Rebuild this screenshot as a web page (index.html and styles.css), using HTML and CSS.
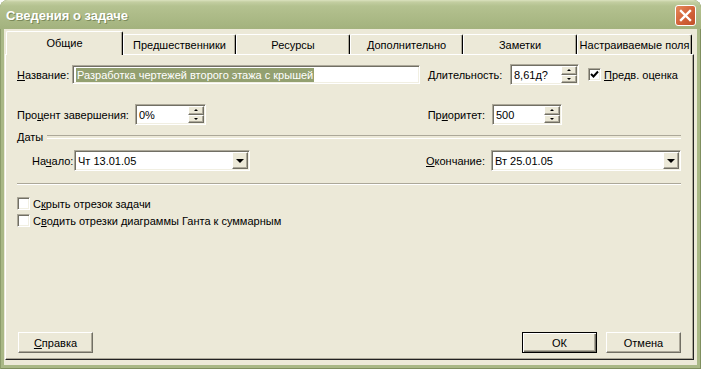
FILE: index.html
```html
<!DOCTYPE html>
<html lang="ru">
<head>
    <meta charset="UTF-8">
    <title>Сведения о задаче</title>
    <link rel="stylesheet" href="styles.css">
</head>
<body>
    <div class="window">
        <div class="titlebar">
            <span class="title">Сведения о задаче</span>
            <span class="close">
                <svg width="13" height="13" viewBox="0 0 13 13">
                    <path d="M2 2 L11 11 M11 2 L2 11" stroke="#fff" stroke-width="2.4" stroke-linecap="square"/>
                </svg>
            </span>
        </div>

        <div class="client">
            <!-- Tabs -->
            <div class="tabs">
                <div class="tab active" style="width:117px">Общие</div>
                <div class="tab" style="width:113px">Предшественники</div>
                <div class="tab" style="width:114px">Ресурсы</div>
                <div class="tab" style="width:113px">Дополнительно</div>
                <div class="tab" style="width:114px">Заметки</div>
                <div class="tab" style="width:115px">Настраиваемые поля</div>
            </div>

            <div class="page">
                <div class="row row-first">
                    <div class="left">
                        <label class="lbl lbl-name"><u>Н</u>азвание:</label>
                        <div class="edit edit-name"><span class="sel">Разработка чертежей второго этажа с крышей</span></div>
                    </div>
                    <div class="right">
                        <label class="lbl lbl-dur"><u>Д</u>лительность:</label>
                        <div class="spin spin-dur">
                            <span class="val">8,61д?</span>
                            <span class="arrows"><span class="arr up"></span><span class="arr down"></span></span>
                        </div>
                        <div class="check check-est">
                            <span class="box">
                                <svg width="9" height="9" viewBox="0 0 9 9">
                                    <path d="M1 4 L3.5 6.5 L8 1.5" fill="none" stroke="#000" stroke-width="2"/>
                                </svg>
                            </span>
                            <span><u>П</u>редв. оценка</span>
                        </div>
                    </div>
                </div>

                <div class="row row-second">
                    <div class="left">
                        <label class="lbl lbl-pct">Про<u>ц</u>ент завершения:</label>
                        <div class="spin spin-pct">
                            <span class="val">0%</span>
                            <span class="arrows"><span class="arr up"></span><span class="arr down"></span></span>
                        </div>
                    </div>
                    <div class="right">
                        <label class="lbl lbl-rt">Пр<u>и</u>оритет:</label>
                        <div class="spin spin-prio">
                            <span class="val">500</span>
                            <span class="arrows"><span class="arr up"></span><span class="arr down"></span></span>
                        </div>
                    </div>
                </div>

                <div class="group">Даты</div>

                <div class="row row-dates">
                    <div class="left">
                        <label class="lbl lbl-start">На<u>ч</u>ало:</label>
                        <div class="combo combo-start">
                            <span class="val">Чт 13.01.05</span>
                            <span class="drop"></span>
                        </div>
                    </div>
                    <div class="right">
                        <label class="lbl lbl-rt"><u>О</u>кончание:</label>
                        <div class="combo combo-end">
                            <span class="val">Вт 25.01.05</span>
                            <span class="drop"></span>
                        </div>
                    </div>
                </div>

                <div class="sep"></div>

                <div class="check check-row">
                    <span class="box"></span>
                    <span>С<u>к</u>рыть отрезок задачи</span>
                </div>
                <div class="check check-row second">
                    <span class="box"></span>
                    <span>С<u>в</u>одить отрезки диаграммы Ганта к суммарным</span>
                </div>

                <div class="buttons">
                    <div class="btn"><u>С</u>правка</div>
                    <span class="spacer"></span>
                    <div class="btn default">ОК</div>
                    <div class="btn">Отмена</div>
                </div>
            </div>
        </div>
    </div>
</body>
</html>
```

FILE: styles.css
```css
* {
    margin: 0;
    padding: 0;
    box-sizing: border-box;
}

body {
    width: 701px;
    height: 369px;
    overflow: hidden;
    font-family: "Liberation Sans", Arial, sans-serif;
    font-size: 11px;
    color: #000;
    background: #fff;
}

u {
    text-decoration: underline;
    text-underline-offset: 1px;
}

/* Window frame */
.window {
    width: 701px;
    height: 369px;
    display: flex;
    flex-direction: column;
    background: #a9b886;
    border-radius: 8px 8px 0 0;
    box-shadow: inset 1px 0 0 #8c9c6b, inset -1px 0 0 #7f8f5e, inset 0 -1px 0 #7f8f5e;
}

.titlebar {
    height: 29px;
    display: flex;
    align-items: center;
    padding: 0 5px 0 6px;
    border-radius: 8px 8px 0 0;
    background: linear-gradient(#dbe2bf 0, #c3cea1 2px, #b4c290 6px, #aebc89 14px, #a8b783 22px, #a3b27e 29px);
}

.title {
    flex: 1;
    color: #fff;
    font-weight: bold;
    font-size: 13px;
    text-shadow: 1px 1px 0 #7b8a5a;
    padding-top: 2px;
}

.close {
    width: 21px;
    height: 21px;
    border: 1px solid #fff;
    border-radius: 3px;
    background: linear-gradient(135deg, #e48a5c 0%, #d4643a 50%, #c1502a 100%);
    display: flex;
    align-items: center;
    justify-content: center;
    margin-top: 2px;
}

.client {
    flex: 1;
    margin: 0 4px 4px 4px;
    background: #ece9d8;
    padding: 2px 3px 5px 1px;
    display: flex;
    flex-direction: column;
}

/* Tabs */
.tabs {
    display: flex;
    align-items: flex-end;
    height: 23px;
    padding-left: 1px;
}

.tab {
    height: 20px;
    line-height: 20px;
    text-align: center;
    white-space: nowrap;
    background: #ece9d8;
    border-top: 1px solid #fff;
    border-left: 1px solid #fff;
    border-right: 1px solid #000;
    box-shadow: inset -1px 0 0 #aca899;
    border-radius: 2px 2px 0 0;
    overflow: hidden;
}

.tab.active {
    height: 24px;
    line-height: 23px;
    margin-bottom: -1px;
    position: relative;
    z-index: 1;
    padding-bottom: 2px;
}

.page {
    flex: 1;
    display: flex;
    flex-direction: column;
    border-top: 1px solid #fff;
    border-left: 1px solid #fff;
    border-right: 1px solid #222;
    border-bottom: 1px solid #222;
    box-shadow: inset -1px -1px 0 #aca899;
    padding: 9px 12px 6px 11px;
}

/* Form rows */
.row {
    display: flex;
    align-items: center;
}

.left {
    width: 410px;
    display: flex;
    align-items: center;
}

.right {
    flex: 1;
    display: flex;
    align-items: center;
}

.lbl {
    white-space: nowrap;
    flex-shrink: 0;
}

.lbl-name { width: 55px; }
.lbl-dur { width: 83px; padding-left: 1px; }
.lbl-pct { width: 118px; }
.lbl-rt { width: 65px; text-align: right; padding-right: 7px; }
.lbl-start { width: 42px; margin-left: 15px; }

.row-first { height: 21px; }
.row-second { height: 21px; margin-top: 19px; }
.row-dates { height: 21px; margin-top: 6px; }

/* Sunken fields */
.edit, .spin, .combo {
    height: 21px;
    background: #fff;
    border: 1px solid;
    border-color: #aca899 #fff #fff #aca899;
    box-shadow: inset 1px 1px 0 #716f64, inset -1px -1px 0 #f1efe2;
    display: flex;
    align-items: center;
}

.edit-name {
    width: 348px;
    height: 19px;
    padding: 2px 0 2px 3px;
}

.sel {
    background: #93a070;
    color: #fff;
    line-height: 14px;
    white-space: nowrap;
    padding: 0 1px;
}

.val {
    flex: 1;
    padding-left: 3px;
    white-space: nowrap;
}

.spin-dur { width: 69px; }
.spin-pct { width: 71px; }
.spin-prio { width: 70px; }

.arrows {
    width: 16px;
    height: 17px;
    margin-right: 1px;
    display: flex;
    flex-direction: column;
}

.arr {
    flex: 1;
    background: #ece9d8;
    border: 1px solid;
    border-color: #fff #716f64 #716f64 #fff;
    box-shadow: inset -1px -1px 0 #aca899;
    display: flex;
    align-items: center;
    justify-content: center;
}

.arr::after {
    content: '';
    border-left: 2px solid transparent;
    border-right: 2px solid transparent;
}

.arr.up::after { border-bottom: 2px solid #000; }
.arr.down::after { border-top: 2px solid #000; }

.combo-start { width: 176px; }
.combo-end { width: 190px; }

.drop {
    width: 16px;
    height: 17px;
    margin-right: 1px;
    background: #ece9d8;
    border: 1px solid;
    border-color: #fff #716f64 #716f64 #fff;
    box-shadow: inset -1px -1px 0 #aca899;
    display: flex;
    align-items: center;
    justify-content: center;
}

.drop::after {
    content: '';
    border-left: 4px solid transparent;
    border-right: 4px solid transparent;
    border-top: 4px solid #000;
    margin-top: 1px;
}

/* Group header and separator */
.group {
    display: flex;
    align-items: center;
    gap: 4px;
    height: 14px;
    margin-top: 5px;
}

.group::after {
    content: '';
    flex: 1;
    height: 2px;
    border-top: 1px solid #aca899;
    border-bottom: 1px solid #fff;
}

.sep {
    height: 2px;
    border-top: 1px solid #aca899;
    border-bottom: 1px solid #fff;
    margin-top: 12px;
}

/* Checkboxes */
.check {
    display: flex;
    align-items: center;
    gap: 3px;
    white-space: nowrap;
}

.check-est { margin-left: 9px; }

.box {
    width: 13px;
    height: 13px;
    background: #fff;
    border: 1px solid;
    border-color: #aca899 #fff #fff #aca899;
    box-shadow: inset 1px 1px 0 #716f64, inset -1px -1px 0 #f1efe2;
    display: flex;
    align-items: center;
    justify-content: center;
    flex-shrink: 0;
}

.check-row { margin-top: 12px; }
.check-row.second { margin-top: 4px; }

/* Buttons */
.buttons {
    margin-top: auto;
    display: flex;
    gap: 9px;
    padding-left: 1px;
}

.spacer { flex: 1; }

.btn {
    width: 75px;
    height: 21px;
    display: flex;
    align-items: center;
    justify-content: center;
    background: #ece9d8;
    border: 1px solid;
    border-color: #fff #716f64 #716f64 #fff;
    box-shadow: inset -1px -1px 0 #aca899;
}

.btn.default {
    border: 1px solid #000;
    box-shadow: inset 1px 1px 0 #fff, inset -1px -1px 0 #716f64, inset -2px -2px 0 #aca899;
}
```
